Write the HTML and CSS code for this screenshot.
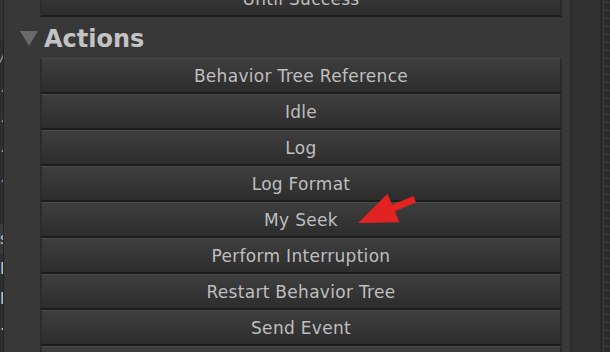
FILE: index.html
```html
<!DOCTYPE html>
<html lang="en">
<head>
  <meta charset="UTF-8">
  <title>Actions</title>
  <link rel="stylesheet" href="styles.css">
</head>
<body>

  <div class="side">
    <div class="side-top"></div>
    <p class="side-label">/</p>
    <p class="side-label">∠</p>
    <p class="side-label">∠</p>
    <p class="side-label">∠</p>
    <p class="side-label">∠</p>
    <div class="side-group">
      <p class="side-label light band">s</p>
      <p class="side-label light">E</p>
      <p class="side-label light">E</p>
      <p class="side-label light">&lt;</p>
    </div>
  </div>

  <div class="panel">
    <button class="btn btn-top">Until Success</button>

    <div class="section">
      <span class="arrow-down"></span>
      <span class="section-title">Actions</span>
    </div>

    <div class="btn-list">
      <button class="btn">Behavior Tree Reference</button>
      <button class="btn">Idle</button>
      <button class="btn">Log</button>
      <button class="btn">Log Format</button>
      <button class="btn">My Seek</button>
      <button class="btn">Perform Interruption</button>
      <button class="btn">Restart Behavior Tree</button>
      <button class="btn">Send Event</button>
      <button class="btn">Set Field Value</button>
    </div>
  </div>

  <div class="scroll"></div>
  <div class="grid"></div>

  <!-- red pointer drawn over the list -->
  <svg class="pointer" width="610" height="352" viewBox="0 0 610 352">
    <polygon fill="#e32222" points="358,223 399.5,222.3 394.9,211.2 416.1,202.3 413.3,195.9 392.1,204.8 387.5,193.7"/>
  </svg>

</body>
</html>
```

FILE: styles.css
```css
body {
  margin: 0;
  width: 610px;
  height: 352px;
  overflow: hidden;
  display: flex;
  background-color: #383838;
  font-family: "DejaVu Sans", Verdana, sans-serif;
  position: relative;
}
.side {
  width: 3px;
  flex-shrink: 0;
  overflow: hidden;
  background-color: #2f2f2f;
  border-right: 1px solid #252525;
}
.side-top {
  height: 41px;
  background-color: #333333;
  border-bottom: 1px solid #262626;
}
.side-label {
  margin: 0;
  height: 30px;
  line-height: 30px;
  font-size: 15px;
  font-style: italic;
  color: #9a9a9a;
  text-align: right;
  white-space: nowrap;
}
.side-group {
  margin-top: 32px;
}
.side-label.light {
  font-style: normal;
  color: #c8c8c8;
}
.side-label.band {
  background-color: #3b3b3b;
}
.panel {
  width: 522px;
  flex-shrink: 0;
  padding: 0 8px 0 36px;
}
.btn {
  display: block;
  width: 100%;
  height: 36px;
  margin: 0;
  padding: 1px 0 0;
  border-top: 1px solid #484848;
  border-bottom: 2px solid #1d1d1d;
  border-left: 2px solid #2c2c2c;
  border-right: 2px solid #2a2a2a;
  background: linear-gradient(#3e3e3e, #2d2d2d);
  color: #bfbfbf;
  font-family: "DejaVu Sans", Verdana, sans-serif;
  font-size: 17px;
  letter-spacing: 0.3px;
  text-align: center;
}
.btn-top {
  margin-top: -19px;
}
.section {
  height: 41px;
  display: flex;
  align-items: center;
  gap: 6px;
  margin-left: -20px;
  padding-top: 2px;
  box-sizing: border-box;
}
.arrow-down {
  width: 0;
  height: 0;
  border-left: 9px solid transparent;
  border-right: 9px solid transparent;
  border-top: 15px solid #6a6a6a;
}
.section-title {
  font-size: 24px;
  font-weight: bold;
  color: #c3c3c3;
}
.scroll {
  width: 28px;
  flex-shrink: 0;
  background-color: #313131;
  border-left: 2px solid #2b2b2b;
}
.grid {
  flex: 1;
  border-left: 3px solid #2a2a2a;
  background-color: #2b2b2b;
  background-image:
    linear-gradient(#3c3c3c 1px, transparent 1px),
    linear-gradient(90deg, #3c3c3c 1px, transparent 1px);
  background-size: 8px 8px;
  background-position: 0 2px;
}
.pointer {
  position: absolute;
  left: 0;
  top: 0;
}
```
